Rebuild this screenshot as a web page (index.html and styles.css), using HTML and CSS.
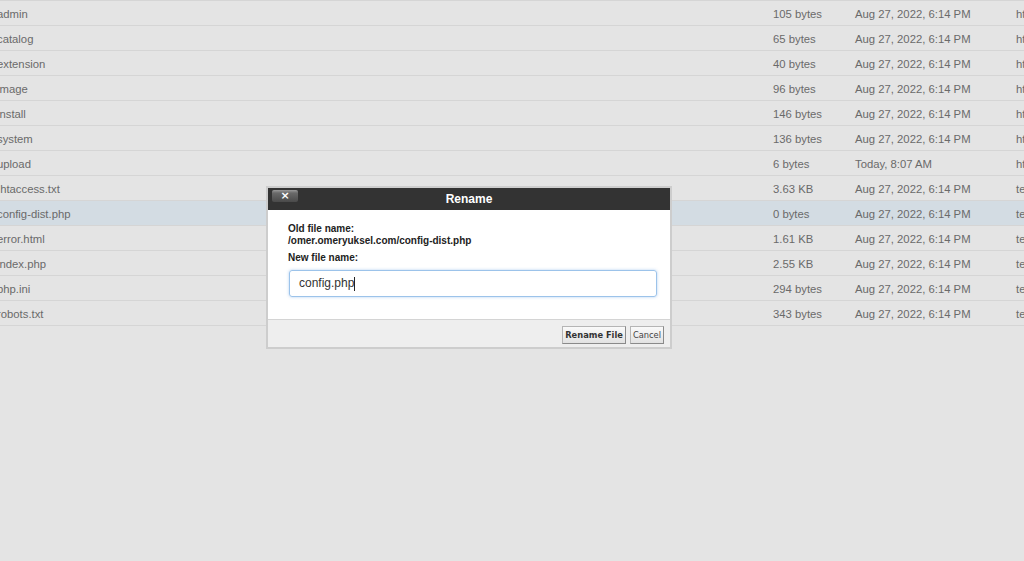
FILE: index.html
```html
<!DOCTYPE html>
<html lang="en">
<head>
    <meta charset="UTF-8">
    <meta name="viewport" content="width=device-width, initial-scale=1.0">
    <title>File Manager - Rename</title>
    <link rel="stylesheet" href="styles.css">
</head>
<body>

    <div class="file-list">
        <div class="row"><span class="name">admin</span><span>105 bytes</span><span>Aug 27, 2022, 6:14 PM</span><span>httpd/unix-directory</span></div>
        <div class="row"><span class="name">catalog</span><span>65 bytes</span><span>Aug 27, 2022, 6:14 PM</span><span>httpd/unix-directory</span></div>
        <div class="row"><span class="name">extension</span><span>40 bytes</span><span>Aug 27, 2022, 6:14 PM</span><span>httpd/unix-directory</span></div>
        <div class="row"><span class="name">image</span><span>96 bytes</span><span>Aug 27, 2022, 6:14 PM</span><span>httpd/unix-directory</span></div>
        <div class="row"><span class="name">install</span><span>146 bytes</span><span>Aug 27, 2022, 6:14 PM</span><span>httpd/unix-directory</span></div>
        <div class="row"><span class="name">system</span><span>136 bytes</span><span>Aug 27, 2022, 6:14 PM</span><span>httpd/unix-directory</span></div>
        <div class="row"><span class="name">upload</span><span>6 bytes</span><span>Today, 8:07 AM</span><span>httpd/unix-directory</span></div>
        <div class="row"><span class="name">.htaccess.txt</span><span>3.63 KB</span><span>Aug 27, 2022, 6:14 PM</span><span>text/plain</span></div>
        <div class="row selected"><span class="name">config-dist.php</span><span>0 bytes</span><span>Aug 27, 2022, 6:14 PM</span><span>text/x-generic</span></div>
        <div class="row"><span class="name">error.html</span><span>1.61 KB</span><span>Aug 27, 2022, 6:14 PM</span><span>text/html</span></div>
        <div class="row"><span class="name">index.php</span><span>2.55 KB</span><span>Aug 27, 2022, 6:14 PM</span><span>text/x-generic</span></div>
        <div class="row"><span class="name">php.ini</span><span>294 bytes</span><span>Aug 27, 2022, 6:14 PM</span><span>text/x-generic</span></div>
        <div class="row"><span class="name">robots.txt</span><span>343 bytes</span><span>Aug 27, 2022, 6:14 PM</span><span>text/plain</span></div>
    </div>

    <div class="dialog">
        <div class="dialog-head">
            <button class="close-btn">&#215;</button>
            <span class="dialog-title">Rename</span>
            <span class="head-spacer"></span>
        </div>
        <div class="dialog-body">
            <div class="label">Old file name:</div>
            <div class="label">/omer.omeryuksel.com/config-dist.php</div>
            <div class="label new-label">New file name:</div>
            <div class="input-box">config.php<span class="caret"></span></div>
        </div>
        <div class="dialog-foot">
            <button class="btn btn-primary">Rename File</button>
            <button class="btn">Cancel</button>
        </div>
    </div>

</body>
</html>
```

FILE: styles.css
```css
html, body {
    margin: 0;
    height: 100%;
}
body {
    font-family: "Liberation Sans", Arial, sans-serif;
    background: #e4e4e4;
    color: #6a6a6a;
    overflow: hidden;
}
.file-list {
    border-top: 1px solid #d5d5d5;
    margin-left: -3px;
}
.row {
    display: grid;
    grid-template-columns: 776px 82px 161px 1fr;
    height: 23px;
    padding-top: 1px;
    align-items: center;
    border-bottom: 1px solid #d5d5d5;
    font-size: 11.3px;
    white-space: nowrap;
    overflow: hidden;
}
.row.selected {
    background: #d3dce3;
}

/* rename dialog */
.dialog {
    position: absolute;
    left: 266px;
    top: 186px;
    width: 402px;
    border: 2px solid #cdcdcd;
    background: #fff;
    display: flex;
    flex-direction: column;
}
.dialog-head {
    height: 22px;
    background: #333333;
    display: flex;
    align-items: flex-start;
    padding: 0 4px;
}
.close-btn {
    width: 26px;
    height: 12px;
    margin-top: 2px;
    padding: 0;
    border: none;
    border-radius: 2px;
    background: linear-gradient(to bottom, #9a9a9a 0, #6a6a6a 25%, #4a4a4a 100%);
    color: #fff;
    font-family: "DejaVu Sans", sans-serif;
    font-weight: bold;
    font-size: 11px;
    line-height: 12px;
}
.dialog-title {
    flex: 1;
    text-align: center;
    color: #fff;
    font-weight: bold;
    font-size: 12px;
    line-height: 22px;
}
.head-spacer {
    width: 26px;
}
.dialog-body {
    height: 96px;
    padding: 13px 12px 0 20px;
}
.label {
    font-weight: bold;
    font-size: 10px;
    line-height: 12px;
    color: #222;
}
.new-label {
    margin-top: 5px;
}
.input-box {
    margin: 6px 0 0 1px;
    height: 25px;
    width: 357px;
    padding-left: 9px;
    border: 1px solid #9cc3ea;
    border-radius: 3px;
    box-shadow: 0 0 3px rgba(100, 160, 230, 0.5);
    font-size: 12px;
    line-height: 25px;
    color: #333;
    display: flex;
    align-items: center;
}
.caret {
    display: inline-block;
    width: 1px;
    height: 14px;
    background: #222;
}
.dialog-foot {
    height: 27px;
    border-top: 1px solid #d4d4d4;
    background: #eeeeee;
    display: flex;
    justify-content: flex-end;
    align-items: flex-start;
    gap: 4px;
    padding: 0 6px 0 0;
}
.btn {
    margin-top: 6px;
    height: 18px;
    padding: 0 2px;
    border: 1px solid #b5b5b5;
    border-right-color: #8a8a8a;
    border-bottom-color: #8a8a8a;
    background: linear-gradient(to bottom, #fafafa, #e2e2e2);
    font-family: "DejaVu Sans", Verdana, sans-serif;
    font-size: 8.3px;
    color: #444;
}
.btn-primary {
    font-weight: bold;
    color: #333;
}
```
